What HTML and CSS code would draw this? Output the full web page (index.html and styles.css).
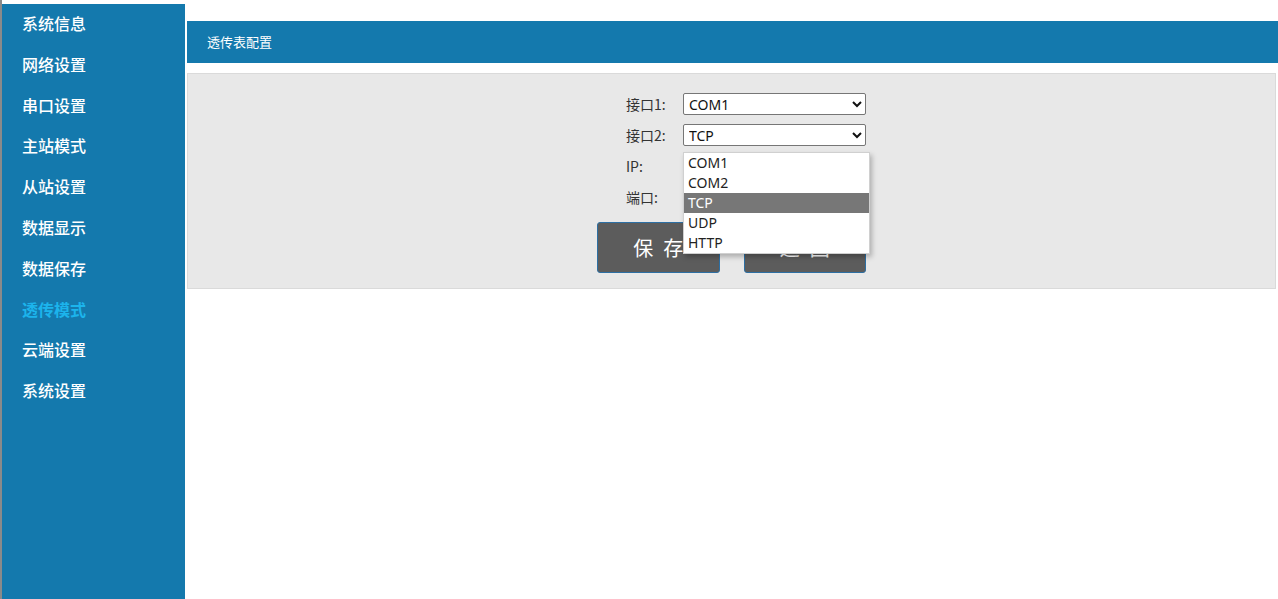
FILE: index.html
```html
<!DOCTYPE html>
<html lang="zh-CN">
<head>
    <meta charset="UTF-8">
    <title>透传模式</title>
    <link rel="stylesheet" href="styles.css">
</head>
<body>
    <div class="page">
        <!-- left menu -->
        <ul class="menu">
            <li>系统信息</li>
            <li>网络设置</li>
            <li>串口设置</li>
            <li>主站模式</li>
            <li>从站设置</li>
            <li>数据显示</li>
            <li>数据保存</li>
            <li class="active">透传模式</li>
            <li>云端设置</li>
            <li>系统设置</li>
        </ul>

        <div class="main">
            <div class="title-bar">透传表配置</div>

            <div class="panel">
                <form class="config-form">
                    <div class="row">
                        <label>接口1:</label>
                        <select>
                            <option selected>COM1</option>
                            <option>COM2</option>
                            <option>TCP</option>
                            <option>UDP</option>
                            <option>HTTP</option>
                        </select>
                    </div>
                    <div class="row">
                        <label>接口2:</label>
                        <div class="select-wrap">
                            <select>
                                <option>COM1</option>
                                <option>COM2</option>
                                <option selected>TCP</option>
                                <option>UDP</option>
                                <option>HTTP</option>
                            </select>
                            <!-- opened list -->
                            <ul class="dropdown">
                                <li>COM1</li>
                                <li>COM2</li>
                                <li class="hover">TCP</li>
                                <li>UDP</li>
                                <li>HTTP</li>
                            </ul>
                        </div>
                    </div>
                    <div class="row">
                        <label>IP:</label>
                        <input type="text">
                    </div>
                    <div class="row">
                        <label>端口:</label>
                        <input type="text">
                    </div>
                    <div class="buttons">
                        <button type="button">保存</button>
                        <button type="button">返回</button>
                    </div>
                </form>
            </div>
        </div>
    </div>
</body>
</html>
```

FILE: styles.css
```css
/* page layout */
body {
    margin: 0;
    padding: 0;
    background: #fff;
    font-family: "Noto Sans", "Noto Sans CJK SC", sans-serif;
}

.page {
    display: flex;
    align-items: flex-start;
    border-left: 2px solid #8a8a8a;
    min-height: 599px;
    box-sizing: border-box;
}

.menu {
    list-style: none;
    margin: 4px 0 0 0;
    padding: 0;
    width: 183px;
    height: 595px;
    background: #1479ad;
    flex-shrink: 0;
}

.menu li {
    height: 40.8px;
    line-height: 39px;
    padding-left: 20px;
    color: #fff;
    font-size: 16px;
    font-weight: 500;
    font-family: "Noto Sans CJK SC", sans-serif;
}

.menu li.active {
    color: #1cb4ec;
    font-weight: bold;
}

.main {
    flex: 1;
    margin-left: 2px;
    padding-top: 21px;
}

.title-bar {
    height: 42px;
    line-height: 42px;
    background: #1479ad;
    color: #fff;
    font-size: 13px;
    padding-left: 20px;
    font-family: "Noto Sans CJK SC", sans-serif;
}

.panel {
    margin: 10px 2px 0 0;
    background: #e8e8e8;
    border: 1px solid #dadada;
    padding: 19px 0 15px 0;
}

.config-form {
    width: 269px;
    margin: 0 auto;
    font-size: 14px;
    color: #333;
}

.row {
    display: flex;
    align-items: center;
    padding-left: 29px;
    height: 22px;
    margin-bottom: 9px;
}

.row label {
    width: 57px;
    font-family: "Noto Sans CJK SC", sans-serif;
}

.row select,
.row input {
    width: 183px;
    height: 22px;
    box-sizing: border-box;
    border: 1px solid #767676;
    border-radius: 2px;
    background: #fff;
    font-family: "Noto Sans", sans-serif;
    font-size: 14px;
    color: #111;
    padding: 0 0 0 1px;
}

.select-wrap {
    position: relative;
}

.dropdown {
    position: absolute;
    top: 28px;
    left: 0;
    width: 185px;
    margin: 0;
    padding: 0;
    list-style: none;
    background: #fff;
    border: 1px solid #d0d0d0;
    box-shadow: 2px 3px 5px rgba(0, 0, 0, 0.25);
    z-index: 5;
}

.dropdown li {
    height: 20px;
    line-height: 20px;
    padding-left: 4px;
    font-size: 14px;
    color: #222;
}

.dropdown li.hover {
    background: #777;
    color: #fff;
}

.buttons {
    display: flex;
    gap: 24px;
    margin-top: 14px;
}

.buttons button {
    width: 123px;
    height: 51px;
    background: #5c5c5c;
    color: #fff;
    border: 1px solid #2d6fa3;
    border-radius: 3px;
    font-size: 20px;
    letter-spacing: 10px;
    text-indent: 10px;
    font-family: "Noto Sans CJK SC", sans-serif;
}
```
